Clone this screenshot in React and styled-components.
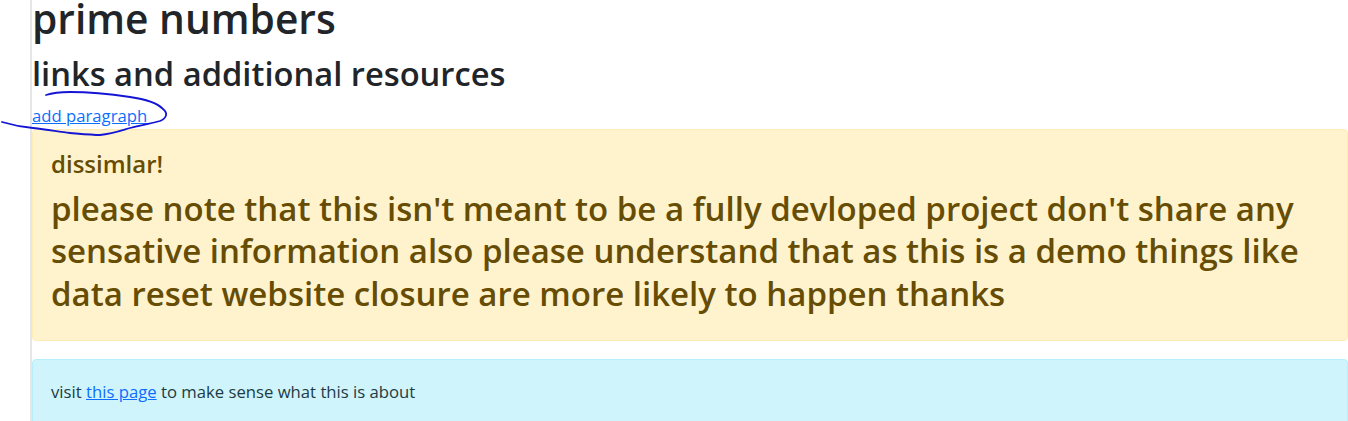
import React from 'react'
import styled, { createGlobalStyle } from 'styled-components'

const GlobalStyle = createGlobalStyle`
  html {
    overflow: hidden;
  }
  body {
    margin: 0;
    padding: 0;
    background: #fff;
    font-family: 'Open Sans', 'Noto Sans', 'DejaVu Sans', sans-serif;
    color: #212529;
    font-size: 16px;
    line-height: 1.5;
  }
`

const Page = styled.div`
  padding-left: 30px;
`

const Main = styled.main`
  position: relative;
  display: flow-root;
  min-height: 421px;
  border-left: 2px solid #e6e6e6;
`

const Title = styled.h1`
  margin: -6px 0 11px;
  font-size: 40.7px;
  font-weight: 600;
  line-height: 1.2;
  color: #212529;
`

const SubTitle = styled.h2`
  margin: 0 0 11px;
  font-size: 32.7px;
  font-weight: 600;
  line-height: 1.2;
  color: #212529;
`

const AddLink = styled.a`
  display: block;
  width: fit-content;
  color: #0d6efd;
  text-decoration: underline;
  font-size: 16.7px;
  line-height: 24px;
  cursor: pointer;
  margin-bottom: 1px;
`

const Alert = styled.div`
  padding: 20px 18px 19px;
  border: 1px solid ${p => (p.$variant === 'info' ? '#b6effb' : '#ffecb5')};
  border-radius: 4px;
  background: ${p => (p.$variant === 'info' ? '#cff4fc' : '#fff3cd')};
  color: ${p => (p.$variant === 'info' ? '#1d3b44' : '#664d03')};
  margin-bottom: 18px;
`

const AlertHeading = styled.h4`
  margin: 0 0 9px;
  font-size: 24px;
  font-weight: 600;
  line-height: 1.2;
`

const Notice = styled.h2`
  margin: 0 0 6px;
  font-size: 33px;
  font-weight: 600;
  line-height: 42.5px;
`

const InfoText = styled.p`
  margin: 0 0 16px;
  font-size: 16.7px;
  line-height: 24px;
`

const InlineLink = styled.a`
  color: #0d6efd;
  text-decoration: underline;
`

const Scribble = styled.svg`
  position: absolute;
  left: -32px;
  top: 0;
  pointer-events: none;
`

export default function App() {
  return (
    <>
      <GlobalStyle />
      <Page>
        <Main>
          <Title>prime numbers</Title>
          <SubTitle>links and additional resources</SubTitle>
          <AddLink>add paragraph</AddLink>
          <Alert $variant="warning">
            <AlertHeading>dissimlar!</AlertHeading>
            <Notice>
              please note that this isn't meant to be a fully devloped project don't share any
              sensative information also please understand that as this is a demo things like
              data reset website closure are more likely to happen thanks
            </Notice>
          </Alert>
          <Alert $variant="info">
            <InfoText>
              visit <InlineLink>this page</InlineLink> to make sense what this is about
            </InfoText>
          </Alert>
          <Scribble width="200" height="150" viewBox="0 0 200 150">
            <path
              d="M2 122 C 12 125, 22 127, 33 128 C 50 130, 60 132, 70 133 C 82 134, 92 135, 100 135 C 112 134, 120 131, 130 128 C 142 125, 152 123, 160 121 C 167 118, 168 113, 163 109 C 157 103, 145 99, 130 97 C 110 94, 90 92, 70 92 C 60 92, 52 93, 46 95"
              fill="none"
              stroke="#1414d6"
              strokeWidth="1.8"
              strokeLinecap="round"
            />
          </Scribble>
        </Main>
      </Page>
    </>
  )
}
